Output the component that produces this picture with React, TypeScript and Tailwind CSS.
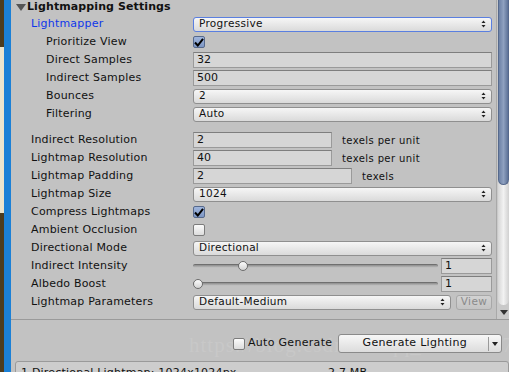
import React from "react";

const font = { fontFamily: '"DejaVu Sans", Verdana, sans-serif' };

function UpDown() {
  return (
    <svg width="5" height="8" viewBox="0 0 5 8" className="shrink-0">
      <path d="M2.5 0.5 L4.5 3 L0.5 3 Z" fill="#222" />
      <path d="M2.5 7.5 L4.5 5 L0.5 5 Z" fill="#222" />
    </svg>
  );
}

function Dropdown({ value, focus, className = "" }: { value: string; focus?: boolean; className?: string }) {
  return (
    <div
      className={`flex h-[15px] items-center justify-between rounded-[3px] border bg-gradient-to-b from-[#f6f6f6] to-[#dadada] pl-[5px] pr-[5px] text-[10.5px] tracking-[0.3px] text-[#111] ${
        focus ? "border-[#5a7fe0]" : "border-[#8f8f8f]"
      } ${className}`}
    >
      <span>{value}</span>
      <UpDown />
    </div>
  );
}

function Field({ value, className = "" }: { value: string; className?: string }) {
  return (
    <div
      className={`flex h-[16px] items-center border border-[#9a9a9a] border-t-[#7e7e7e] bg-[#d6d6d6] pl-[3px] text-[11px] text-[#111] ${className}`}
    >
      {value}
    </div>
  );
}

function Check({ checked }: { checked?: boolean }) {
  return checked ? (
    <div className="flex h-[12px] w-[12px] items-center justify-center rounded-[2px] border border-[#56698c] bg-gradient-to-b from-[#9fb5dc] to-[#7e97c4]">
      <svg width="10" height="9" viewBox="0 0 10 9">
        <path d="M1 4.5 L3.8 7.5 L9 0.8" stroke="#000" strokeWidth="2" fill="none" />
      </svg>
    </div>
  ) : (
    <div className="h-[12px] w-[12px] rounded-[2px] border border-[#7c7c7c] bg-gradient-to-b from-[#fbfbfb] to-[#dcdcdc]" />
  );
}

function Slider({ pos, value }: { pos: number; value: string }) {
  return (
    <div className="flex items-center">
      <div className="relative h-[18px] w-[245px]">
        <div className="absolute left-0 right-0 top-[7px] h-[4px] rounded-full border-t border-[#6f6f6f] bg-gradient-to-b from-[#8c8c8c] to-[#c8c8c8]" />
        <div
          className="absolute top-[4px] h-[10px] w-[10px] rounded-full border border-[#6d6d6d] bg-gradient-to-b from-[#fdfdfd] to-[#d4d4d4]"
          style={{ left: pos }}
        />
      </div>
      <Field value={value} className="ml-[3px] w-[51px]" />
    </div>
  );
}

function Row({ label, sub, blue, children }: { label: string; sub?: boolean; blue?: boolean; children?: React.ReactNode }) {
  return (
    <div className="flex h-[18px] items-center">
      <div
        className={`w-[182px] shrink-0 text-[11px] tracking-[0.2px] ${sub ? "pl-[35px]" : "pl-[20px]"} ${
          blue ? "text-[#0f37ea]" : "text-[#111]"
        }`}
      >
        {label}
      </div>
      <div className="flex-1 pr-[4px]">{children}</div>
    </div>
  );
}

function Unit({ children }: { children: React.ReactNode }) {
  return <span className="text-[10px] tracking-[0.4px] text-[#111]">{children}</span>;
}

export default function App() {
  return (
    <div className="flex h-[372px] w-[509px] overflow-hidden bg-[#c2c2c2]" style={font}>
      {/* scene edge + selection stripe */}
      <div className="flex w-[4px] shrink-0 flex-col bg-[#4d3c1f]">
        <div className="h-[47px]" />
        <div className="h-[166px] bg-[#ece4cd]" />
      </div>
      <div className="w-[7px] shrink-0 bg-[#1b80d6]" />

      <div className="flex min-w-0 flex-1 flex-col">
        <div className="flex h-[320px] shrink-0 overflow-hidden border-b border-[#9a9a9a]">
          <div className="flex-1">
            <div className="flex h-[15px] items-center">
              <svg width="10" height="8" viewBox="0 0 10 8" className="ml-[5px] mr-[1px]">
                <path d="M0 0 L10 0 L5 7 Z" fill="#555" />
              </svg>
              <span className="text-[11px] font-bold tracking-[0.1px] text-[#111]">Lightmapping Settings</span>
            </div>
            <Row label="Lightmapper" blue>
              <Dropdown value="Progressive" focus />
            </Row>
            <Row label="Prioritize View" sub>
              <Check checked />
            </Row>
            <Row label="Direct Samples" sub>
              <Field value="32" />
            </Row>
            <Row label="Indirect Samples" sub>
              <Field value="500" />
            </Row>
            <Row label="Bounces" sub>
              <Dropdown value="2" />
            </Row>
            <Row label="Filtering" sub>
              <Dropdown value="Auto" />
            </Row>
            <div className="h-[8px]" />
            <Row label="Indirect Resolution">
              <div className="flex items-center gap-[10px]">
                <Field value="2" className="w-[139px]" />
                <Unit>texels per unit</Unit>
              </div>
            </Row>
            <Row label="Lightmap Resolution">
              <div className="flex items-center gap-[10px]">
                <Field value="40" className="w-[139px]" />
                <Unit>texels per unit</Unit>
              </div>
            </Row>
            <Row label="Lightmap Padding">
              <div className="flex items-center gap-[10px]">
                <Field value="2" className="w-[159px]" />
                <Unit>texels</Unit>
              </div>
            </Row>
            <Row label="Lightmap Size">
              <Dropdown value="1024" />
            </Row>
            <Row label="Compress Lightmaps">
              <Check checked />
            </Row>
            <Row label="Ambient Occlusion">
              <Check />
            </Row>
            <Row label="Directional Mode">
              <Dropdown value="Directional" />
            </Row>
            <Row label="Indirect Intensity">
              <Slider pos={45} value="1" />
            </Row>
            <Row label="Albedo Boost">
              <Slider pos={0} value="1" />
            </Row>
            <Row label="Lightmap Parameters">
              <div className="flex items-center gap-[5px]">
                <Dropdown value="Default-Medium" className="flex-1" />
                <div className="flex h-[15px] w-[36px] items-center justify-center rounded-[3px] border border-[#a8a8a8] bg-gradient-to-b from-[#d2d2d2] to-[#c4c4c4] text-[10.5px] tracking-[0.4px] text-[#8a8a8a]">
                  View
                </div>
              </div>
            </Row>
          </div>

          {/* scrollbar */}
          <div className="flex w-[13px] shrink-0 flex-col border-l border-[#a9a9a9] bg-[#c9c9c9] pl-[1px]">
            <div className="relative flex-1 rounded-b-[6px] bg-gradient-to-r from-[#d6d6d6] via-[#f2f2f2] to-[#d0d0d0]">
              <div className="h-[185px] rounded-b-[6px] border border-t-0 border-[#56698c] bg-gradient-to-r from-[#6d82a6] via-[#8fa1c0] to-[#5e7398]" />
            </div>
            <div className="flex h-[14px] items-center justify-center">
              <svg width="8" height="5" viewBox="0 0 8 5">
                <path d="M0 0 L8 0 L4 5 Z" fill="#333" />
              </svg>
            </div>
          </div>
        </div>

        <div className="relative min-h-0 flex-1">
          <div
            className="pointer-events-none absolute left-[178px] top-[10px] text-[21px] tracking-[1px] text-[#c8c8c8]"
            style={{ fontFamily: '"Liberation Serif", serif' }}
          >
            https://blog.csdn.net/qq_24312667
          </div>
          <div className="relative mt-[14px] flex items-center">
            <div className="ml-[222px] flex items-center gap-[3px]">
              <Check />
              <span className="text-[11px] tracking-[0.3px] text-[#111]">Auto Generate</span>
            </div>
            <div className="ml-[6px] flex h-[19px] w-[164px] items-center rounded-[3px] border border-[#8a8a8a] bg-gradient-to-b from-[#f7f7f7] to-[#dcdcdc]">
              <span className="flex-1 pl-[2px] text-center text-[11px] tracking-[0.3px] text-[#111]">Generate Lighting</span>
              <div className="h-[14px] w-px bg-[#9a9a9a]" />
              <div className="flex w-[12px] justify-center">
                <svg width="6" height="4" viewBox="0 0 6 4">
                  <path d="M0 0 L6 0 L3 4 Z" fill="#222" />
                </svg>
              </div>
            </div>
          </div>
          <div className="relative ml-[4px] mt-[8px] flex h-[20px] rounded-t-[3px] border border-[#9a9a9a] bg-[#cdcdcd] pl-[5px] pt-[3px] text-[11px] tracking-[0.2px] text-[#111]">
            <span className="w-[307px]">1 Directional Lightmap: 1024x1024px</span>
            <span>2.7 MB</span>
          </div>
        </div>
      </div>
    </div>
  );
}
